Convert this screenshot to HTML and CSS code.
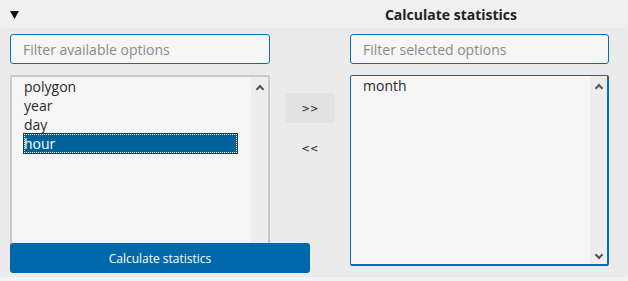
FILE: index.html
```html
<!DOCTYPE html>
<html lang="en">

<head>
    <meta charset="UTF-8">
    <meta name="viewport" content="width=device-width, initial-scale=1.0">
    <title>Calculate statistics</title>
    <link rel="stylesheet" href="styles.css">
</head>

<body>
    <div class="panel">
        <div class="panel-head">
            <svg class="caret" width="9" height="8" viewBox="0 0 9 8"><polygon points="0,0 9,0 4.5,8" fill="#111"/></svg>
            <h2 class="panel-title">Calculate statistics</h2>
        </div>

        <div class="picker">
            <!-- available -->
            <div class="col">
                <input class="filter" type="text" placeholder="Filter available options">
                <div class="listbox">
                    <ul class="options">
                        <li>polygon</li>
                        <li>year</li>
                        <li>day</li>
                        <li class="selected">hour</li>
                    </ul>
                    <div class="scroll">
                        <span class="arrow up"></span>
                        <span class="arrow down"></span>
                    </div>
                </div>
                <button class="calc-btn">Calculate statistics</button>
            </div>

            <!-- move buttons -->
            <div class="moves">
                <button class="move move-on">&gt;&gt;</button>
                <button class="move">&lt;&lt;</button>
            </div>

            <!-- selected -->
            <div class="col">
                <input class="filter" type="text" placeholder="Filter selected options">
                <div class="listbox listbox-focus">
                    <ul class="options">
                        <li>month</li>
                    </ul>
                    <div class="scroll">
                        <span class="arrow up"></span>
                        <span class="arrow down"></span>
                    </div>
                </div>
            </div>
        </div>
    </div>
</body>

</html>
```

FILE: styles.css
```css
* {
    margin: 0;
    padding: 0;
    box-sizing: border-box;
}

body {
    background: #f2f2f2;
    font-family: "Open Sans", "Noto Sans", sans-serif;
    color: #222;
}

.panel {
    width: 628px;
    height: 277px;
    background: #ebebeb;
    border-radius: 0 0 4px 4px;
}

.panel-head {
    height: 28px;
    background: #f0f0f0;
    display: flex;
    align-items: center;
    padding-left: 10px;
    border-radius: 0 0 4px 4px;
}

.caret {
    display: block;
    margin-top: 2px;
}

.panel-title {
    flex: 1;
    text-align: center;
    padding-left: 255px;
    font-size: 14px;
    font-weight: bold;
    color: #222;
    margin-top: 1px;
}

.picker {
    display: flex;
    padding: 6px 0 0 10px;
}

.col {
    width: 260px;
    display: flex;
    flex-direction: column;
    gap: 11px;
    position: relative;
}

.col:last-child {
    width: 259px;
}

.filter {
    height: 30px;
    border: 1px solid #0a6cb0;
    border-radius: 3px;
    background: #f6f6f6;
    padding: 0 12px;
    font-family: "Open Sans", "Noto Sans", sans-serif;
    font-size: 14px;
    outline: none;
}

.filter::placeholder {
    color: #8a8a8a;
}

.listbox {
    height: 191px;
    border: 2px solid #cacaca;
    border-radius: 2px;
    background: #f6f6f6;
    display: flex;
}

.listbox-focus {
    border: 1px solid #0a6cb0;
    border-width: 1px 2px 2px 1px;
}

.options {
    list-style: none;
    flex: 1;
    padding: 0 14px 0 12px;
    font-size: 14px;
    line-height: 19px;
    color: #2a2a2a;
}

.options li {
    height: 19px;
}

.options .selected {
    background: #00629c;
    color: #fff;
    outline: 1px dotted #fff;
    outline-offset: -1px;
    box-shadow: 0 0 0 1px #0a3d60;
}

.scroll {
    width: 17px;
    background: #ededed;
    display: flex;
    flex-direction: column;
    justify-content: space-between;
    align-items: center;
    padding: 7px 0 6px;
}

.arrow {
    width: 6px;
    height: 6px;
    border: solid #555;
    border-width: 2px 0 0 2px;
}

.arrow.up {
    transform: rotate(45deg);
    margin-top: 2px;
}

.arrow.down {
    transform: rotate(225deg);
}

.calc-btn {
    position: absolute;
    left: 0;
    top: 209px;
    width: 300px;
    height: 30px;
    border: none;
    border-radius: 3px;
    background: #0069ab;
    color: #fff;
    font-family: "Open Sans", "Noto Sans", sans-serif;
    font-size: 12px;
}

.moves {
    width: 80px;
    display: flex;
    flex-direction: column;
    align-items: center;
    padding-top: 59px;
    gap: 10px;
}

.move {
    width: 50px;
    height: 30px;
    border: none;
    border-radius: 3px;
    background: transparent;
    font-family: "DejaVu Sans", sans-serif;
    font-size: 10px;
    color: #222;
}

.move-on {
    background: #e2e2e2;
}
```
